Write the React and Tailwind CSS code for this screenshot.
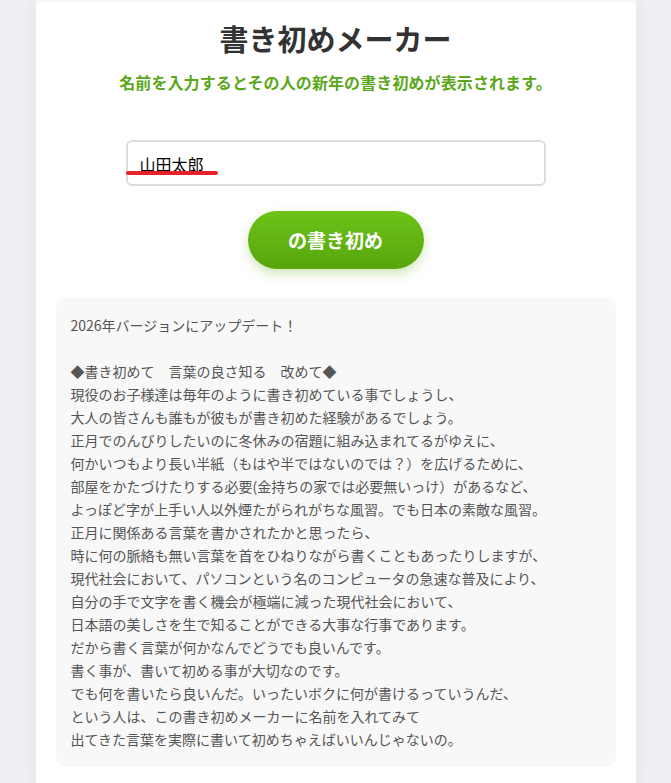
import { useState } from 'react';

const lines = [
  '2026年バージョンにアップデート！',
  '',
  '◆書き初めて　言葉の良さ知る　改めて◆',
  '現役のお子様達は毎年のように書き初めている事でしょうし、',
  '大人の皆さんも誰もが彼もが書き初めた経験があるでしょう。',
  '正月でのんびりしたいのに冬休みの宿題に組み込まれてるがゆえに、',
  '何かいつもより長い半紙（もはや半ではないのでは？）を広げるために、',
  '部屋をかたづけたりする必要(金持ちの家では必要無いっけ）があるなど、',
  'よっぽど字が上手い人以外煙たがられがちな風習。でも日本の素敵な風習。',
  '正月に関係ある言葉を書かされたかと思ったら、',
  '時に何の脈絡も無い言葉を首をひねりながら書くこともあったりしますが、',
  '現代社会において、パソコンという名のコンピュータの急速な普及により、',
  '自分の手で文字を書く機会が極端に減った現代社会において、',
  '日本語の美しさを生で知ることができる大事な行事であります。',
  'だから書く言葉が何かなんでどうでも良いんです。',
  '書く事が、書いて初める事が大切なのです。',
  'でも何を書いたら良いんだ。いったいボクに何が書けるっていうんだ、',
  'という人は、この書き初めメーカーに名前を入れてみて',
  '出てきた言葉を実際に書いて初めちゃえばいいんじゃないの。',
];

export default function App() {
  const [name, setName] = useState('山田太郎');

  return (
    <div className="min-h-screen bg-[#eeeff3] font-['Noto_Sans_CJK_JP','Noto_Sans',sans-serif]">
      <div className="mx-auto w-[600px] min-h-screen bg-white px-5 pt-[18px] pb-4 shadow-[0_0_14px_rgba(0,0,0,0.06),inset_0_3px_3px_-2px_rgba(0,0,0,0.06)]">
        {/* Header */}
        <h1 className="text-center text-[29px] font-bold leading-[40px] text-[#333]">書き初めメーカー</h1>
        <p className="mt-3 text-center text-[16px] font-bold leading-6 tracking-[0.1px] text-[#5ba71a]">
          名前を入力するとその人の新年の書き初めが表示されます。
        </p>

        {/* Form */}
        <div className="relative mx-auto mt-[46px] w-[420px]">
          <input
            type="text"
            value={name}
            onChange={(e) => setName(e.target.value)}
            className="block h-[46px] w-full rounded-md border-2 border-[#ddd] bg-white px-3 pt-px text-[16px] text-black outline-none"
          />
          <span className="absolute left-0 top-[31px] h-[4px] w-[92px] rounded-full bg-[#e62129]" />
        </div>

        <div className="mt-[25px] flex justify-center">
          <button className="h-[58px] w-[176px] rounded-full bg-gradient-to-b from-[#6cc318] to-[#58a50d] text-[19px] font-bold text-white shadow-[0_5px_12px_rgba(100,180,30,0.3)]">
            の書き初め
          </button>
        </div>

        {/* Description */}
        <div className="mt-[29px] rounded-[10px] bg-[#f8f8f8] px-[15px] py-4 text-[14px] leading-[23px] text-[#555]">
          {lines.map((line, i) => (
            <div key={i} className="h-[23px] whitespace-pre">{line}</div>
          ))}
        </div>
      </div>
    </div>
  );
}
